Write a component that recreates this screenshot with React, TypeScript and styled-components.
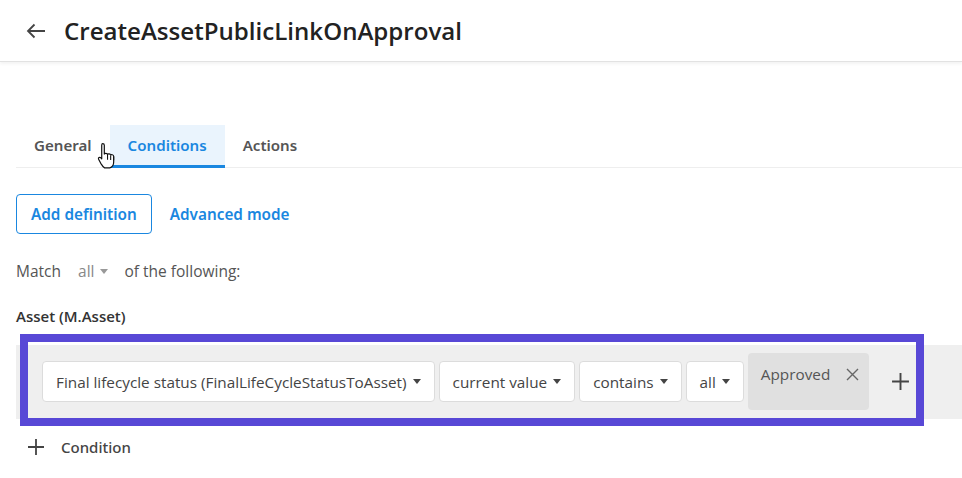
import styled, { createGlobalStyle } from "styled-components";

const GlobalStyle = createGlobalStyle`
  body {
    margin: 0;
    background: #fff;
    font-family: "Open Sans", "Noto Sans", sans-serif;
    color: #333;
  }
`;

const clauses = [
  "Final lifecycle status (FinalLifeCycleStatusToAsset)",
  "current value",
  "contains",
  "all",
];

const Caret = () => (
  <svg width="8" height="5" viewBox="0 0 8 5">
    <path d="M0 0h8L4 5z" fill="currentColor" />
  </svg>
);

const PlusIcon = ({ size = 18 }: { size?: number }) => (
  <svg width={size} height={size} viewBox="0 0 18 18">
    <path d="M9 1v16M1 9h16" stroke="#444" strokeWidth="1.8" />
  </svg>
);

const HandCursor = () => (
  <svg width="20" height="28" viewBox="0 0 18 26">
    <path
      d="M5 1.5c.9 0 1.5.6 1.5 1.5v8.2c.3-.9 2.8-.9 3 .3.4-.8 2.6-.8 2.9.6.5-.6 2.6-.5 2.8 1.1v5.3c0 2.6-1.6 4.8-3.6 5.5H6.8c-1.2-.6-2.5-2.4-3.6-4.2L1.2 16c-.6-1.2.8-2.4 2-1.4l.9 1V3c0-.9.3-1.5.9-1.5z"
      fill="#fff"
      stroke="#111"
      strokeWidth="1.1"
      strokeLinejoin="round"
    />
    <path d="M9.5 12v4.5M12.4 12.6v4M15.2 13.5v3.5" stroke="#111" strokeWidth="1" />
  </svg>
);

export default function App() {
  return (
    <Page>
      <GlobalStyle />
      <Header>
        <BackButton>
          <svg width="20" height="16" viewBox="0 0 20 16">
            <path
              d="M19 8H2M8.5 1.5L2 8l6.5 6.5"
              stroke="#444"
              strokeWidth="1.8"
              fill="none"
            />
          </svg>
        </BackButton>
        <Title>CreateAssetPublicLinkOnApproval</Title>
      </Header>
      <Content>
        <Tabs>
          <Tab>General</Tab>
          <Tab active>Conditions</Tab>
          <Tab>Actions</Tab>
          <Cursor>
            <HandCursor />
          </Cursor>
        </Tabs>
        <Buttons>
          <OutlineButton>Add definition</OutlineButton>
          <LinkButton>Advanced mode</LinkButton>
        </Buttons>
        <MatchLine>
          <span>Match</span>
          <MatchSelect>
            all <Caret />
          </MatchSelect>
          <span>of the following:</span>
        </MatchLine>
        <SectionLabel>Asset (M.Asset)</SectionLabel>
        <ConditionRow>
          {clauses.map((c) => (
            <Dropdown key={c}>
              {c} <Caret />
            </Dropdown>
          ))}
          <Chip>
            Approved
            <svg width="13" height="13" viewBox="0 0 13 13">
              <path d="M1 1l11 11M12 1L1 12" stroke="#666" strokeWidth="1.4" />
            </svg>
          </Chip>
          <AddValue>
            <PlusIcon size={19} />
          </AddValue>
          <Highlight />
        </ConditionRow>
        <AddCondition>
          <PlusIcon />
          Condition
        </AddCondition>
      </Content>
    </Page>
  );
}

const Page = styled.div`
  width: 962px;
  height: 478px;
  overflow: hidden;
`;

const Header = styled.div`
  height: 61px;
  display: flex;
  align-items: center;
  padding-left: 26px;
  border-bottom: 1px solid #e2e2e2;
  box-shadow: 0 2px 3px rgba(0, 0, 0, 0.05);
`;

const BackButton = styled.div`
  display: flex;
  align-items: center;
  width: 38px;
`;

const Title = styled.h1`
  margin: 0;
  font-family: "Open Sans", sans-serif;
  font-size: 24.1px;
  font-weight: 600;
  color: #222;
`;

const Content = styled.div`
  padding: 63px 0 0 16px;
`;

const Tabs = styled.div`
  position: relative;
  display: flex;
  height: 42px;
  border-bottom: 1px solid #eeeeee;
`;

const Tab = styled.div<{ active?: boolean }>`
  display: flex;
  align-items: center;
  padding: 0 18px;
  font-family: "Noto Sans", sans-serif;
  font-size: 15.1px;
  font-weight: 600;
  color: ${(p) => (p.active ? "#1a87e0" : "#555")};
  background: ${(p) => (p.active ? "#eaf4fd" : "transparent")};
  border-bottom: 3px solid ${(p) => (p.active ? "#1a87e0" : "transparent")};
  margin-bottom: -1px;
`;

const Cursor = styled.div`
  position: absolute;
  left: 81px;
  top: 17px;
`;

const Buttons = styled.div`
  display: flex;
  align-items: center;
  gap: 17px;
  margin-top: 26px;
`;

const OutlineButton = styled.button`
  height: 40px;
  padding: 0 14px;
  background: #fff;
  border: 1px solid #1a87e0;
  border-radius: 4px;
  font-family: "Noto Sans", sans-serif;
  font-size: 15.3px;
  font-weight: 600;
  color: #1a87e0;
`;

const LinkButton = styled(OutlineButton)`
  border-color: transparent;
  padding: 0;
`;

const MatchLine = styled.div`
  display: flex;
  align-items: center;
  height: 24px;
  margin-top: 25px;
  font-size: 15.5px;
  color: #555;
`;

const MatchSelect = styled.span`
  display: inline-flex;
  align-items: center;
  gap: 6px;
  margin: 0 16px 0 17px;
  color: #888;
  svg {
    color: #999;
  }
`;

const SectionLabel = styled.div`
  margin-top: 23px;
  font-size: 15px;
  font-weight: 600;
  color: #333;
`;

const ConditionRow = styled.div`
  position: relative;
  display: flex;
  align-items: flex-start;
  gap: 4px;
  margin-top: 19px;
  height: 74px;
  padding: 8px 0 0 26px;
  box-sizing: border-box;
  background: #efefef;
`;

const Dropdown = styled.div`
  display: flex;
  align-items: center;
  gap: 6px;
  height: 41px;
  margin-top: 8px;
  padding: 0 13px;
  box-sizing: border-box;
  background: #fff;
  border: 1px solid #dcdcdc;
  border-radius: 4px;
  font-size: 15.3px;
  color: #444;
  white-space: nowrap;
`;

const Chip = styled.div`
  display: flex;
  align-items: flex-start;
  gap: 16px;
  height: 57px;
  padding: 11px 10px 0 13px;
  box-sizing: border-box;
  background: #e0e0e0;
  border-radius: 4px;
  font-size: 15.3px;
  color: #555;
  svg {
    margin-top: 4px;
  }
`;

const AddValue = styled.div`
  margin: 19px 0 0 18px;
`;

const Highlight = styled.div`
  position: absolute;
  left: 4px;
  top: -11px;
  width: 904px;
  height: 92px;
  box-sizing: border-box;
  border: 8px solid #5848d6;
  pointer-events: none;
`;

const AddCondition = styled.div`
  display: flex;
  align-items: center;
  gap: 16px;
  margin: 18px 0 0 11px;
  font-family: "Noto Sans", sans-serif;
  font-size: 15px;
  font-weight: 500;
  color: #444;
`;
